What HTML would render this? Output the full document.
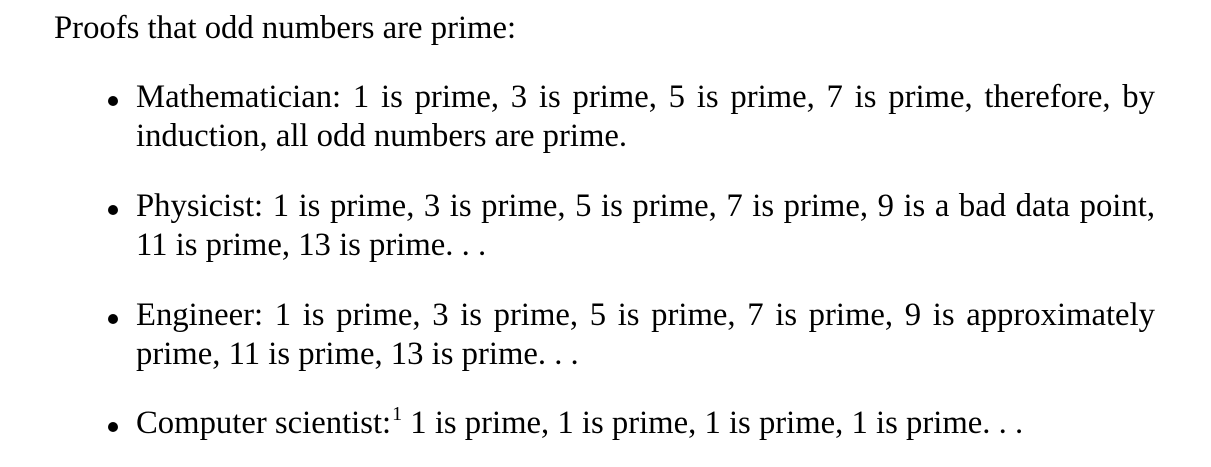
<!DOCTYPE html>
<html><head><meta charset="utf-8"><style>
html,body{margin:0;padding:0;background:#fff;width:1211px;height:467px;overflow:hidden}
body{font-family:"Liberation Serif",serif;font-size:32.7px;color:#000;position:relative}
.l{position:absolute;line-height:39px;white-space:nowrap}
.j{white-space:normal;text-align:justify;text-align-last:justify;width:1019px;left:136px}
.b{position:absolute;left:108px;width:10px;height:10px;border-radius:50%;background:#000}
.s{font-size:20px;position:relative;top:-13px;margin-left:1px}
</style></head><body>
<div class="l" style="left:54px;top:9px">Proofs that odd numbers are prime:</div>

<div class="b" style="top:96px"></div>
<div class="l j" style="top:78px">Mathematician: 1 is prime, 3 is prime, 5 is prime, 7 is prime, therefore, by</div>
<div class="l" style="left:136px;top:117px">induction, all odd numbers are prime.</div>

<div class="b" style="top:205px"></div>
<div class="l j" style="top:187px">Physicist: 1 is prime, 3 is prime, 5 is prime, 7 is prime, 9 is a bad data point,</div>
<div class="l" style="left:136px;top:226px">11 is prime, 13 is prime. . .</div>

<div class="b" style="top:314px"></div>
<div class="l j" style="top:296px">Engineer: 1 is prime, 3 is prime, 5 is prime, 7 is prime, 9 is approximately</div>
<div class="l" style="left:136px;top:335px">prime, 11 is prime, 13 is prime. . .</div>

<div class="b" style="top:422px"></div>
<div class="l" style="left:136px;top:404px">Computer scientist:<span class="s">1</span> 1 is prime, 1 is prime, 1 is prime, 1 is prime. . .</div>
</body></html>
